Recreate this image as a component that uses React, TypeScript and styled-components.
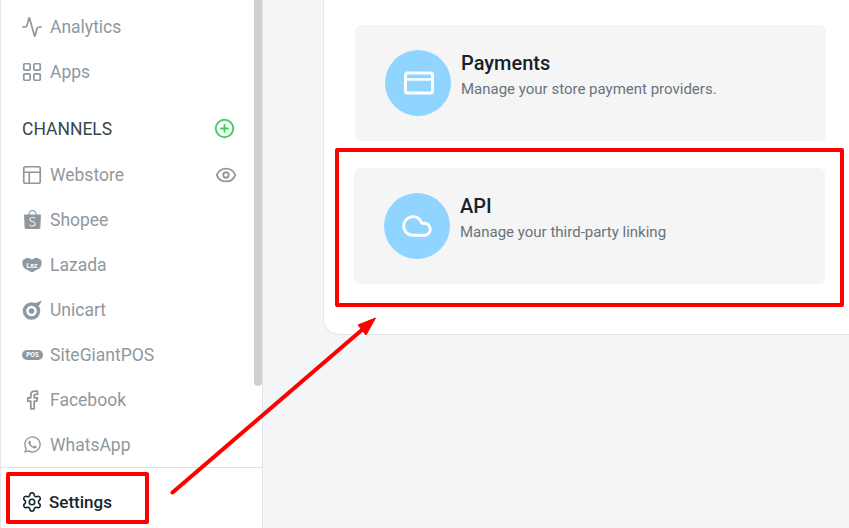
import React, { FC, ReactNode } from 'react'
import styled, { createGlobalStyle } from 'styled-components'
import { Activity, CirclePlus, Cloud, Eye, LayoutGrid, PanelsTopLeft, Settings } from 'lucide-react'
import { FaWhatsapp } from 'react-icons/fa'
import { SiShopee } from 'react-icons/si'

const GlobalStyle = createGlobalStyle`
  html, body {
    margin: 0;
    padding: 0;
    background: #f4f5f7;
  }
  * {
    box-sizing: border-box;
  }
`

const Page = styled.div`
  position: relative;
  display: flex;
  width: 849px;
  height: 528px;
  overflow: hidden;
  background: #f4f5f7;
  font-family: Roboto, "Liberation Sans", sans-serif;
`

const Sidebar = styled.aside`
  position: relative;
  display: flex;
  flex-direction: column;
  flex: 0 0 263px;
  background: #fff;
  border-left: 1px solid #e4e6e8;
  border-right: 1px solid #e4e6e8;
`

const ScrollThumb = styled.div`
  position: absolute;
  top: 0;
  right: 0;
  width: 8px;
  height: 386px;
  background: #d0d0d0;
  border-radius: 0 0 4px 4px;
`

const Nav = styled.nav`
  flex: 1;
  padding: 4px 27px 0 21px;
`

const NavItem = styled.div`
  display: flex;
  align-items: center;
  height: 45px;
  color: #8f989e;
  font-size: 17.5px;
`

const NavIcon = styled.span<{ $color?: string; $gap?: number }>`
  display: flex;
  align-items: center;
  justify-content: center;
  flex: 0 0 20px;
  width: 20px;
  min-width: 0;
  height: 20px;
  margin-right: ${(p) => p.$gap ?? 8}px;
  color: ${(p) => p.$color ?? '#8f989e'};

  > svg {
    flex-shrink: 0;
  }
`

const NavLabel = styled.span`
  flex: 1;
`

const ChannelHeading = styled.div`
  display: flex;
  align-items: center;
  justify-content: space-between;
  height: 46px;
  margin-top: 12px;
  padding-bottom: 1px;
  color: #37474f;
  font-size: 17.5px;
`

const SideAction = styled.span<{ $color: string; $pull?: number }>`
  display: flex;
  margin-right: ${(p) => p.$pull ?? 0}px;
  color: ${(p) => p.$color};
`

const Footer = styled.div`
  display: flex;
  align-items: center;
  height: 61px;
  padding: 8px 0 0 21px;
  border-top: 1px solid #dfe1e3;
  color: #17262e;
  font-size: 17px;
  font-weight: 500;
`

const Main = styled.main`
  flex: 1;
  padding-left: 60px;
`

const Panel = styled.section`
  height: 335px;
  padding: 25px 0 0 30px;
  background: #fff;
  border-left: 1px solid #e4e6e8;
  border-bottom: 1px solid #e4e6e8;
  border-radius: 0 0 0 16px;
`

const Card = styled.div<{ $shift?: number }>`
  display: flex;
  align-items: flex-start;
  width: 471px;
  height: 116px;
  margin-left: ${(p) => p.$shift ?? 0}px;
  margin-bottom: 27px;
  padding: 25px 30px;
  background: #f5f5f5;
  border-radius: 6px;
`

const IconCircle = styled.div`
  display: flex;
  align-items: center;
  justify-content: center;
  flex: 0 0 66px;
  height: 66px;
  margin-right: 10px;
  border-radius: 50%;
  background: #90d5ff;
  color: #fff;
`

const CardText = styled.div`
  padding-top: 1px;
`

const CardTitle = styled.h3`
  margin: 0;
  color: #17212b;
  font-size: 20px;
  font-weight: 500;
  line-height: 24px;
`

const CardDescription = styled.p`
  margin: 5px 0 0;
  color: #68737d;
  font-size: 15px;
  line-height: 18px;
`

const Highlight = styled.div<{ $left: number; $top: number; $width: number; $height: number }>`
  position: absolute;
  left: ${(p) => p.$left}px;
  top: ${(p) => p.$top}px;
  width: ${(p) => p.$width}px;
  height: ${(p) => p.$height}px;
  border: 4px solid #ff0000;
  border-radius: 2px;
`

const ArrowLayer = styled.svg`
  position: absolute;
  inset: 0;
  pointer-events: none;
`

const CreditCardIcon: FC = () => (
  <svg width="32" height="26" viewBox="0 0 32 26" fill="none" stroke="currentColor" strokeWidth="3">
    <rect x="3.5" y="3" width="27" height="20" rx="2" />
    <path d="M4 9.5h26" strokeWidth="2.5" />
  </svg>
)

const LazadaIcon: FC = () => (
  <svg width="20" height="16" viewBox="0 0 20 16">
    <path d="M.8 3 5 .8c2 0 3.500 1 5 1.800 1.500-.8 3-1.800 5-1.800L19.200 3c.8 4 .3 6.500-2 8.500l-7.200 4-7.200-4c-2.300-2-2.800-4.500-2-8.500Z" fill="currentColor" />
    <text x="10" y="10.500" textAnchor="middle" fontSize="7" fontWeight="700" fill="#fff" fontFamily="Roboto, sans-serif">Laz</text>
  </svg>
)

const UnicartIcon: FC = () => (
  <svg width="21" height="20" viewBox="0 0 21 20" fill="none">
    <circle cx="9.500" cy="11" r="7" stroke="currentColor" strokeWidth="3.500" />
    <circle cx="9.500" cy="11" r="2.800" fill="currentColor" />
    <path d="M12 3.500 20 .8l-4 6.500Z" fill="currentColor" />
  </svg>
)

const PosIcon: FC = () => (
  <svg width="21" height="10" viewBox="0 0 21 10">
    <rect width="21" height="10" rx="5" fill="currentColor" />
    <text x="10.500" y="7.300" textAnchor="middle" fontSize="6.500" fontWeight="700" fill="#fff" fontFamily="Roboto, sans-serif">POS</text>
  </svg>
)

const FacebookIcon: FC = () => (
  <svg width="14" height="20" viewBox="0 0 14 20" fill="none" stroke="currentColor" strokeWidth="1.800" strokeLinejoin="round">
    <path d="M12.500 1.200H9.800C7.300 1.200 5.800 2.800 5.800 5.200v2.600H2.800v3.400h3v7.600h3.400v-7.600h2.700l.6-3.400H9.200V5.600c0-.8.500-1.200 1.200-1.200h2.100Z" />
  </svg>
)

const channels: { label: string; icon: ReactNode; extra?: ReactNode }[] = [
  {
    label: 'Webstore',
    icon: <PanelsTopLeft size={22} strokeWidth={1.9} />,
    extra: (
      <SideAction $color="#8f989e" $pull={-2}>
        <Eye size={22} strokeWidth={2} />
      </SideAction>
    ),
  },
  { label: 'Shopee', icon: <SiShopee size={19} /> },
  { label: 'Lazada', icon: <LazadaIcon /> },
  { label: 'Unicart', icon: <UnicartIcon /> },
  { label: 'SiteGiantPOS', icon: <PosIcon /> },
  { label: 'Facebook', icon: <FacebookIcon /> },
  { label: 'WhatsApp', icon: <FaWhatsapp size={19} /> },
]

const App: FC = () => {
  return (
    <Page>
      <GlobalStyle />
      <Sidebar>
        <ScrollThumb />
        <Nav>
          <NavItem>
            <NavIcon>
              <Activity size={22} strokeWidth={1.9} />
            </NavIcon>
            <NavLabel>Analytics</NavLabel>
          </NavItem>
          <NavItem>
            <NavIcon>
              <LayoutGrid size={22} strokeWidth={1.9} />
            </NavIcon>
            <NavLabel>Apps</NavLabel>
          </NavItem>
          <ChannelHeading>
            CHANNELS
            <SideAction $color="#3fcf5c">
              <CirclePlus size={21} strokeWidth={2.2} />
            </SideAction>
          </ChannelHeading>
          {channels.map((c) => (
            <NavItem key={c.label}>
              <NavIcon>{c.icon}</NavIcon>
              <NavLabel>{c.label}</NavLabel>
              {c.extra}
            </NavItem>
          ))}
        </Nav>
        <Footer>
          <NavIcon $color="#17262e" $gap={7}>
            <Settings size={22} strokeWidth={1.7} />
          </NavIcon>
          Settings
        </Footer>
      </Sidebar>
      <Main>
        <Panel>
          <Card $shift={1}>
            <IconCircle>
              <CreditCardIcon />
            </IconCircle>
            <CardText>
              <CardTitle>Payments</CardTitle>
              <CardDescription>Manage your store payment providers.</CardDescription>
            </CardText>
          </Card>
          <Card>
            <IconCircle>
              <Cloud size={32} strokeWidth={2.2} />
            </IconCircle>
            <CardText>
              <CardTitle>API</CardTitle>
              <CardDescription>Manage your third-party linking</CardDescription>
            </CardText>
          </Card>
        </Panel>
      </Main>
      <Highlight $left={6} $top={472} $width={143} $height={52} />
      <Highlight $left={335} $top={148} $width={509} $height={159} />
      <ArrowLayer width="849" height="528" viewBox="0 0 849 528">
        <path d="M172.500 492.500 363 329" stroke="#ff0000" strokeWidth="4" strokeLinecap="round" />
        <path d="M375.500 318 358 325 366 335Z" fill="#ff0000" stroke="#ff0000" strokeWidth="1" />
      </ArrowLayer>
    </Page>
  )
}

export default App
